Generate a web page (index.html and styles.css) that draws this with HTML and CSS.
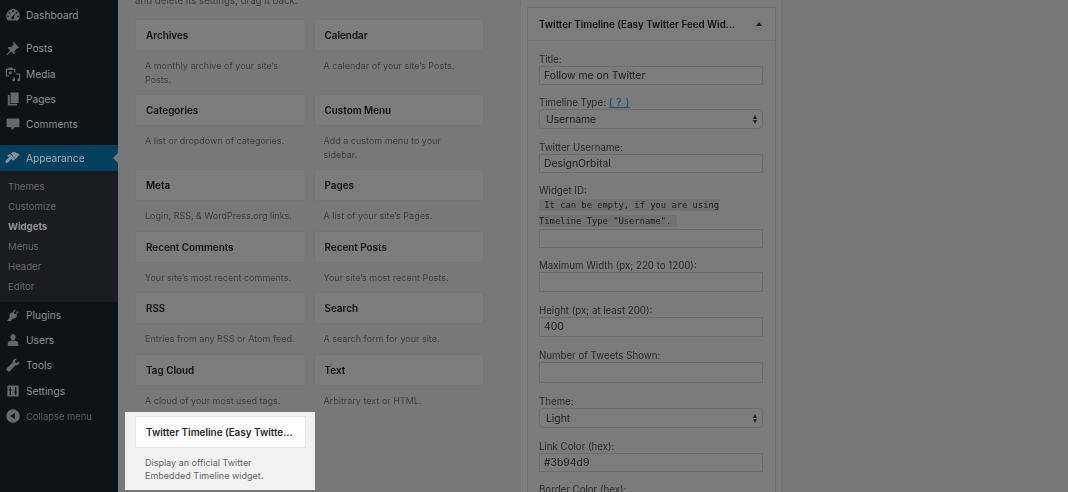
FILE: index.html
```html
<!DOCTYPE html>
<html lang="en">
<head>
<meta charset="utf-8">
<title>Widgets</title>
<link rel="stylesheet" href="styles.css">
</head>
<body>
<div class="page">
  <nav class="sidebar">
    <a class="item item-first"><svg class="icon" viewBox="0 0 20 20"><path fill-rule="evenodd" d="M10 2.500a8.500 8.500 0 0 0-8.500 8.500c0 2.300.9 4.300 2.400 5.800h12.200a8.500 8.500 0 0 0 2.400-5.800A8.500 8.500 0 0 0 10 2.500zm0 1.700a1.100 1.100 0 1 1 0 2.200 1.100 1.100 0 0 1 0-2.200zM5.500 6a1.100 1.100 0 1 1 0 2.200 1.100 1.100 0 0 1 0-2.200zm9 0a1.100 1.100 0 1 1 0 2.200 1.100 1.100 0 0 1 0-2.200zM3.800 10.500a1.100 1.100 0 1 1 0 2.200 1.100 1.100 0 0 1 0-2.200zm12.400 0a1.100 1.100 0 1 1 0 2.200 1.100 1.100 0 0 1 0-2.200zM13.500 7l-2.300 5.300a1.900 1.900 0 1 1-1.600-.8z"/></svg>Dashboard</a>
    <div class="group">
      <a class="item"><svg class="icon" viewBox="0 0 20 20"><path d="M10.400 2.300l7.300 7.300-1.400 1.100-1-.6-3.300 2.900.2 3.400-1.300 1-3-3.100-5.500 4.700-.5-.5 4.700-5.500-3.100-3 1-1.300 3.400.2 2.900-3.300-.6-1z"/></svg>Posts</a>
      <a class="item"><svg class="icon" viewBox="0 0 20 20"><path fill-rule="evenodd" d="M1 3.500h3L5 2h4l1 1.500h3V8h-1.500V5h-9v6.500H5V13H1zM6.500 6.500a2 2 0 1 1 0 4 2 2 0 0 1 0-4z"/><path d="M14 9.500h5v7.700a1.800 1.800 0 1 1-1.500-1.800V11H14zM9.500 14.500h2.200a.8.800 0 0 1 .8.800v2.200a1.700 1.700 0 1 1-1.500-1.700v-.8h-1.500z"/></svg>Media</a>
      <a class="item"><svg class="icon" viewBox="0 0 20 20"><path d="M7 2h10v13H7zM3.500 5H6v11h9v2H3.500z"/></svg>Pages</a>
      <a class="item"><svg class="icon" viewBox="0 0 20 20"><path d="M3 3h14a1 1 0 0 1 1 1v9a1 1 0 0 1-1 1h-5l-4 4v-4H3a1 1 0 0 1-1-1V4a1 1 0 0 1 1-1z"/></svg>Comments</a>
    </div>
    <a class="item item-current"><svg class="icon" viewBox="0 0 20 20"><path d="M7.500 4.500L9 3c1-1 3-.8 4.300.2 1.300 1 2.500 1.800 5.200 1.800l-5 6.500z"/><path d="M6.800 5.200l6 6-1.800 1.800c-.4.400-1 .400-1.400 0l-1-1c-.4-.4-1-.4-1.400 0-.6.600-1.100 1.400-1.700 2.200-1 1.300-3 2.600-4.400 1.700-1.300-1-.3-3 1-4 .8-.6 1.600-1.100 2.200-1.700.4-.4.4-1 0-1.400l-1-1c-.4-.4-.4-1 0-1.400z"/></svg>Appearance</a>
    <div class="submenu">
      <a class="subitem">Themes</a>
      <a class="subitem">Customize</a>
      <a class="subitem subitem-current">Widgets</a>
      <a class="subitem">Menus</a>
      <a class="subitem">Header</a>
      <a class="subitem">Editor</a>
    </div>
    <a class="item"><svg class="icon" viewBox="0 0 20 20"><path d="M12 3l1.300.9-2.500 3.600 2.100 1.500 2.500-3.600 1.300.9-2.600 3.700 1.200.9-1.400 2c-1 1.500-2.800 2-4.300 1.400L7.500 17.500h-5l3.400-4.700c-.7-1.300-.6-3 .3-4.300l1.400-2 1.300 1z"/></svg>Plugins</a>
    <a class="item"><svg class="icon" viewBox="0 0 20 20"><path d="M10 2.500c2 0 3.300 1.700 3.300 3.700S12 10.500 10 10.500 6.700 8.200 6.700 6.200 8 2.500 10 2.500zM3.500 17.500v-4c0-1.400 2-2.500 4.500-3 .6.500 1.300.8 2 .8s1.400-.3 2-.8c2.500.5 4.500 1.600 4.500 3v4z"/></svg>Users</a>
    <a class="item"><svg class="icon" viewBox="0 0 20 20"><path d="M17.800 5.200c.4 1.400 0 3-1.100 4.100-1 1-2.300 1.400-3.600 1.100L6 17.800a1.600 1.600 0 0 1-2.200 0l-1.600-1.600a1.600 1.600 0 0 1 0-2.200l7.400-7.100c-.3-1.300.1-2.600 1.100-3.600 1.100-1.100 2.700-1.500 4.100-1.100l-2.400 2.400.5 2.400 2.400.5z"/></svg>Tools</a>
    <a class="item"><svg class="icon" viewBox="0 0 20 20"><path d="M3 3h14v14H3zm3 2v3H4.800v1.500H6V15h1.500V9.500h1.200V8H7.500V5zm6.500 0v5.500h-1.200V12h1.200v3H14v-3h1.200v-1.500H14V5z" fill-rule="evenodd"/></svg>Settings</a>
    <a class="item item-collapse"><svg class="icon" viewBox="0 0 20 20"><path d="M10 1.500a8.500 8.500 0 1 1 0 17 8.500 8.500 0 0 1 0-17zm2.500 4.500L6.500 10l6 4z" fill-rule="evenodd"/></svg>Collapse menu</a>
  </nav>

  <main class="content">
    <section class="available">
      <p class="intro">and delete its settings, drag it back.</p>
      <div class="widget-grid">
        <div class="widget"><div class="widget-title">Archives</div><p class="widget-desc">A monthly archive of your site’s Posts.</p></div>
        <div class="widget"><div class="widget-title">Calendar</div><p class="widget-desc">A calendar of your site’s Posts.</p></div>
        <div class="widget"><div class="widget-title">Categories</div><p class="widget-desc">A list or dropdown of categories.</p></div>
        <div class="widget"><div class="widget-title">Custom Menu</div><p class="widget-desc">Add a custom menu to your sidebar.</p></div>
        <div class="widget widget-short"><div class="widget-title">Meta</div><p class="widget-desc">Login, RSS, &amp; WordPress.org links.</p></div>
        <div class="widget widget-short"><div class="widget-title">Pages</div><p class="widget-desc">A list of your site’s Pages.</p></div>
        <div class="widget widget-short"><div class="widget-title">Recent Comments</div><p class="widget-desc">Your site’s most recent comments.</p></div>
        <div class="widget widget-short"><div class="widget-title">Recent Posts</div><p class="widget-desc">Your site’s most recent Posts.</p></div>
        <div class="widget widget-short"><div class="widget-title">RSS</div><p class="widget-desc">Entries from any RSS or Atom feed.</p></div>
        <div class="widget widget-short"><div class="widget-title">Search</div><p class="widget-desc">A search form for your site.</p></div>
        <div class="widget widget-short"><div class="widget-title">Tag Cloud</div><p class="widget-desc">A cloud of your most used tags.</p></div>
        <div class="widget widget-short"><div class="widget-title">Text</div><p class="widget-desc">Arbitrary text or HTML.</p></div>
        <div class="widget widget-lit"><div class="widget-title">Twitter Timeline (Easy Twitte...</div><p class="widget-desc">Display an official Twitter Embedded Timeline widget.</p></div>
      </div>
    </section>

    <aside class="holder">
      <section class="panel">
        <header class="panel-head">
          <span class="panel-title">Twitter Timeline (Easy Twitter Feed Wid...</span>
          <span class="caret"></span>
        </header>
        <div class="form">
          <div class="label">Title:</div>
          <div class="input">Follow me on Twitter</div>
          <div class="label">Timeline Type: <a class="help">( ? )</a></div>
          <div class="select">Username<span class="updown"></span></div>
          <div class="label">Twitter Username:</div>
          <div class="input">DesignOrbital</div>
          <div class="label">Widget ID:</div>
          <div class="hint"><code class="code">&nbsp;It can be empty, if you are using</code><br><code class="code">Timeline Type "Username".&nbsp;</code></div>
          <div class="input"></div>
          <div class="label">Maximum Width (px; 220 to 1200):</div>
          <div class="input input-tall"></div>
          <div class="label">Height (px; at least 200):</div>
          <div class="input input-tall">400</div>
          <div class="label">Number of Tweets Shown:</div>
          <div class="input input-taller"></div>
          <div class="label">Theme:</div>
          <div class="select">Light<span class="updown"></span></div>
          <div class="label">Link Color (hex):</div>
          <div class="input">#3b94d9</div>
          <div class="label">Border Color (hex):</div>
        </div>
      </section>
    </aside>
  </main>
</div>
</body>
</html>
```
FILE: styles.css
```css
* { box-sizing: border-box; }
html, body { margin: 0; height: 492px; overflow: hidden; }
body { font-family: Inter, "Liberation Sans", sans-serif; font-size: 10px; background: #787878; }
.page { display: flex; height: 492px; overflow: hidden; filter: blur(0.3px); }

/* Admin menu */
.sidebar { width: 118px; flex: none; background: #101315; padding-top: 2px; }
.item { display: flex; align-items: center; height: 25.300px; padding-left: 5px; color: #8f9092; font-size: 10.200px; }
.item-first { margin-bottom: 8.500px; }
.group { margin-bottom: 8px; }
.icon { width: 16px; height: 16px; margin-right: 5px; fill: #666869; flex: none; }
.item-current { position: relative; background: #02405e; color: #a3aeb4; height: 26px; }
.item-current .icon { fill: #83929a; }
.item-current::after { content: ""; position: absolute; right: 0; top: 8px; border: 5px solid transparent; border-right-color: #787878; border-left-width: 0; }
.submenu { background: #1a1c20; padding: 6px 0 5px; }
.subitem { display: flex; align-items: center; height: 20px; padding-left: 8px; color: #66686a; font-size: 9.600px; }
.subitem-current { color: #8f9092; font-weight: 700; }
.item-collapse { color: #5b5d5f; font-size: 9.400px; padding-top: 1px; }

/* Content */
.content { flex: 1; display: flex; padding-left: 17px; align-items: flex-start; }
.available { width: 385px; flex: none; margin-top: -6px; }
.intro { margin: 0 0 12px; height: 13px; line-height: 13px; font-size: 9.700px; color: #3f3f3f; }
.widget-grid { display: grid; grid-template-columns: 170.500px 170.500px; column-gap: 8px; }
.widget { height: 75px; }
.widget-short { height: 61.700px; }
.widget-title { height: 32px; line-height: 30px; padding-left: 10px; background: #7c7c7c; border: 1px solid #757575; color: #101010; font-weight: 600; font-size: 9.900px; white-space: nowrap; }
.widget-desc { margin: 8px 0 0; padding: 0 8px 0 10px; font-size: 9px; line-height: 13.500px; color: #404040; }
.widget-lit { position: relative; height: 74px; z-index: 0; }
.widget-lit::before { content: ""; position: absolute; z-index: -1; left: -10px; right: -9px; top: -4px; bottom: 0; background: #f1f1f1; }
.widget-lit .widget-title { background: #fff; border-color: #e6e6e6; color: #23282d; }
.widget-lit .widget-desc { color: #666; }

/* Right-hand sidebar holder */
.holder { width: 262px; height: 520px; flex: none; padding: 7px 5px 0 6px; background: #7d7d7d; border-left: 1px solid #747474; border-right: 1px solid #727272; }
.panel { height: 520px; background: #7b7b7b; border: 1px solid #6f6f6f; border-bottom: 0; }
.panel-head { display: flex; align-items: center; justify-content: space-between; height: 33px; padding: 0 13px 0 11px; border-bottom: 1px solid #707070; background: #7c7c7c; }
.panel-title { color: #101010; font-weight: 600; font-size: 9.800px; white-space: nowrap; }
.caret { border: 3px solid transparent; border-top: 0; border-bottom: 4px solid #1c1c1c; }
.form { padding: 12px 12px 0 11px; }
.label { height: 13px; line-height: 14px; font-size: 9.700px; color: #2b2b2b; white-space: nowrap; }
.input { height: 19px; margin-bottom: 11px; padding-left: 4px; line-height: 17px; border: 1px solid #6c6c6c; background: #7c7c7c; font-size: 10.400px; color: #202020; }
.input-tall { height: 20px; line-height: 18px; margin-bottom: 12px; }
.input-taller { height: 21px; margin-bottom: 12px; }
.select { position: relative; height: 20px; margin-bottom: 12px; padding-left: 6px; line-height: 18px; border: 1px solid #6c6c6c; border-radius: 4px; font-size: 10.300px; color: #202020; background: #7c7c7c; }
.updown { position: absolute; right: 3px; top: 5px; width: 6px; height: 9px; }
.updown::before { content: ""; position: absolute; top: 0; left: 0; border: 2.500px solid transparent; border-top: 0; border-bottom: 4px solid #1c1c1c; }
.updown::after { content: ""; position: absolute; bottom: 0; left: 0; border: 2.500px solid transparent; border-bottom: 0; border-top: 4px solid #1c1c1c; }
.help { color: #0c5c7a; text-decoration: underline; font-weight: 600; letter-spacing: 0.800px; }
.hint { height: 32px; line-height: 16px; font-size: 8.800px; color: #202020; }
.code { font-family: "DejaVu Sans Mono", "Liberation Mono", monospace; background: #727272; padding: 1px 0; }
```
